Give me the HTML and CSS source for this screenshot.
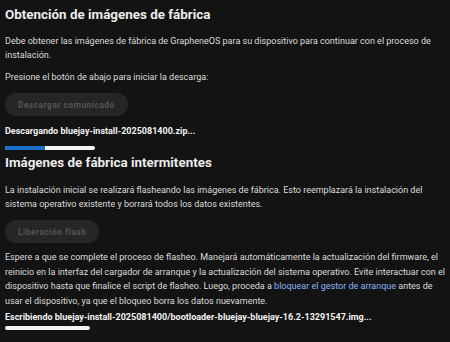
FILE: index.html
```html
<!doctype html>
<html lang="es">
    <head>
        <meta charset="UTF-8" />
        <meta name="viewport" content="width=device-width, initial-scale=1.0" />
        <title>Instalación web de GrapheneOS</title>
        <link rel="stylesheet" href="styles.css">
    </head>
    <body>
        <section class="step">
            <h2>Obtención de imágenes de fábrica</h2>
            <p>
                Debe obtener las imágenes de fábrica de GrapheneOS para su
                dispositivo para continuar con el proceso de instalación.
            </p>
            <p>Presione el botón de abajo para iniciar la descarga:</p>
            <button class="action-btn" disabled>Descargar comunicado</button>
            <div class="status-text">Descargando bluejay-install-2025081400.zip...</div>
            <div class="progress">
                <div class="progress-fill" style="width: 44%"></div>
            </div>
        </section>

        <section class="step">
            <h2>Imágenes de fábrica intermitentes</h2>
            <p>
                La instalación inicial se realizará flasheando las imágenes de
                fábrica. Esto reemplazará la instalación del sistema operativo
                existente y borrará todos los datos existentes.
            </p>
            <button class="action-btn" disabled>Liberación flash</button>
            <p class="flash-info">
                Espere a que se complete el proceso de flasheo. Manejará
                automáticamente la actualización del firmware, el reinicio en la
                interfaz del cargador de arranque y la actualización del sistema
                operativo. Evite interactuar con el dispositivo hasta que
                finalice el script de flasheo. Luego, proceda a
                <a href="#locking-the-bootloader">bloquear el gestor de arranque</a>
                antes de usar el dispositivo, ya que el bloqueo borra los datos
                nuevamente.
            </p>
            <div class="status-text">Escribiendo bluejay-install-2025081400/bootloader-bluejay-bluejay-16.2-13291547.img...</div>
            <div class="progress short">
                <div class="progress-fill" style="width: 0%"></div>
            </div>
        </section>
    </body>
</html>
```

FILE: styles.css
```css
body {
    font-family: Roboto, "Noto Sans", sans-serif;
    margin: 0;
    padding: 4px 5px 0 5px;
    background: #131313;
    color: #dcdcdc;
    font-size: 9px;
    line-height: 14px;
}

h2 {
    margin: 0;
    color: #ececec;
    font-size: 13.4px;
    font-weight: 700;
    line-height: 22px;
}

p {
    margin: 8px 0;
}

a {
    color: #8ab4f8;
    text-decoration: none;
}

.step + .step {
    margin-top: 2px;
}

.step + .step h2 + p {
    margin-top: 9px;
}

.action-btn {
    display: block;
    height: 23px;
    padding: 0 13px;
    margin: 9px 0 6px 0;
    border: none;
    border-radius: 12px;
    background: #262626;
    color: #555;
    font-family: inherit;
    font-size: 8.2px;
    font-weight: 700;
    letter-spacing: 0.6px;
}

.flash-info {
    margin: 7px 0 0 0;
    line-height: 14.5px;
}

.status-text {
    margin-top: 8px;
    color: #f2f2f2;
    font-weight: 700;
    font-size: 9px;
    white-space: nowrap;
}

.flash-info + .status-text {
    margin-top: 2px;
}

.progress {
    width: 90px;
    height: 4px;
    margin-top: 8px;
    border-radius: 2px;
    background: #f4f4f4;
    overflow: hidden;
}

.progress.short {
    width: 85px;
    margin-top: 2px;
}

.progress-fill {
    height: 100%;
    background: #1a6fc9;
}
```
